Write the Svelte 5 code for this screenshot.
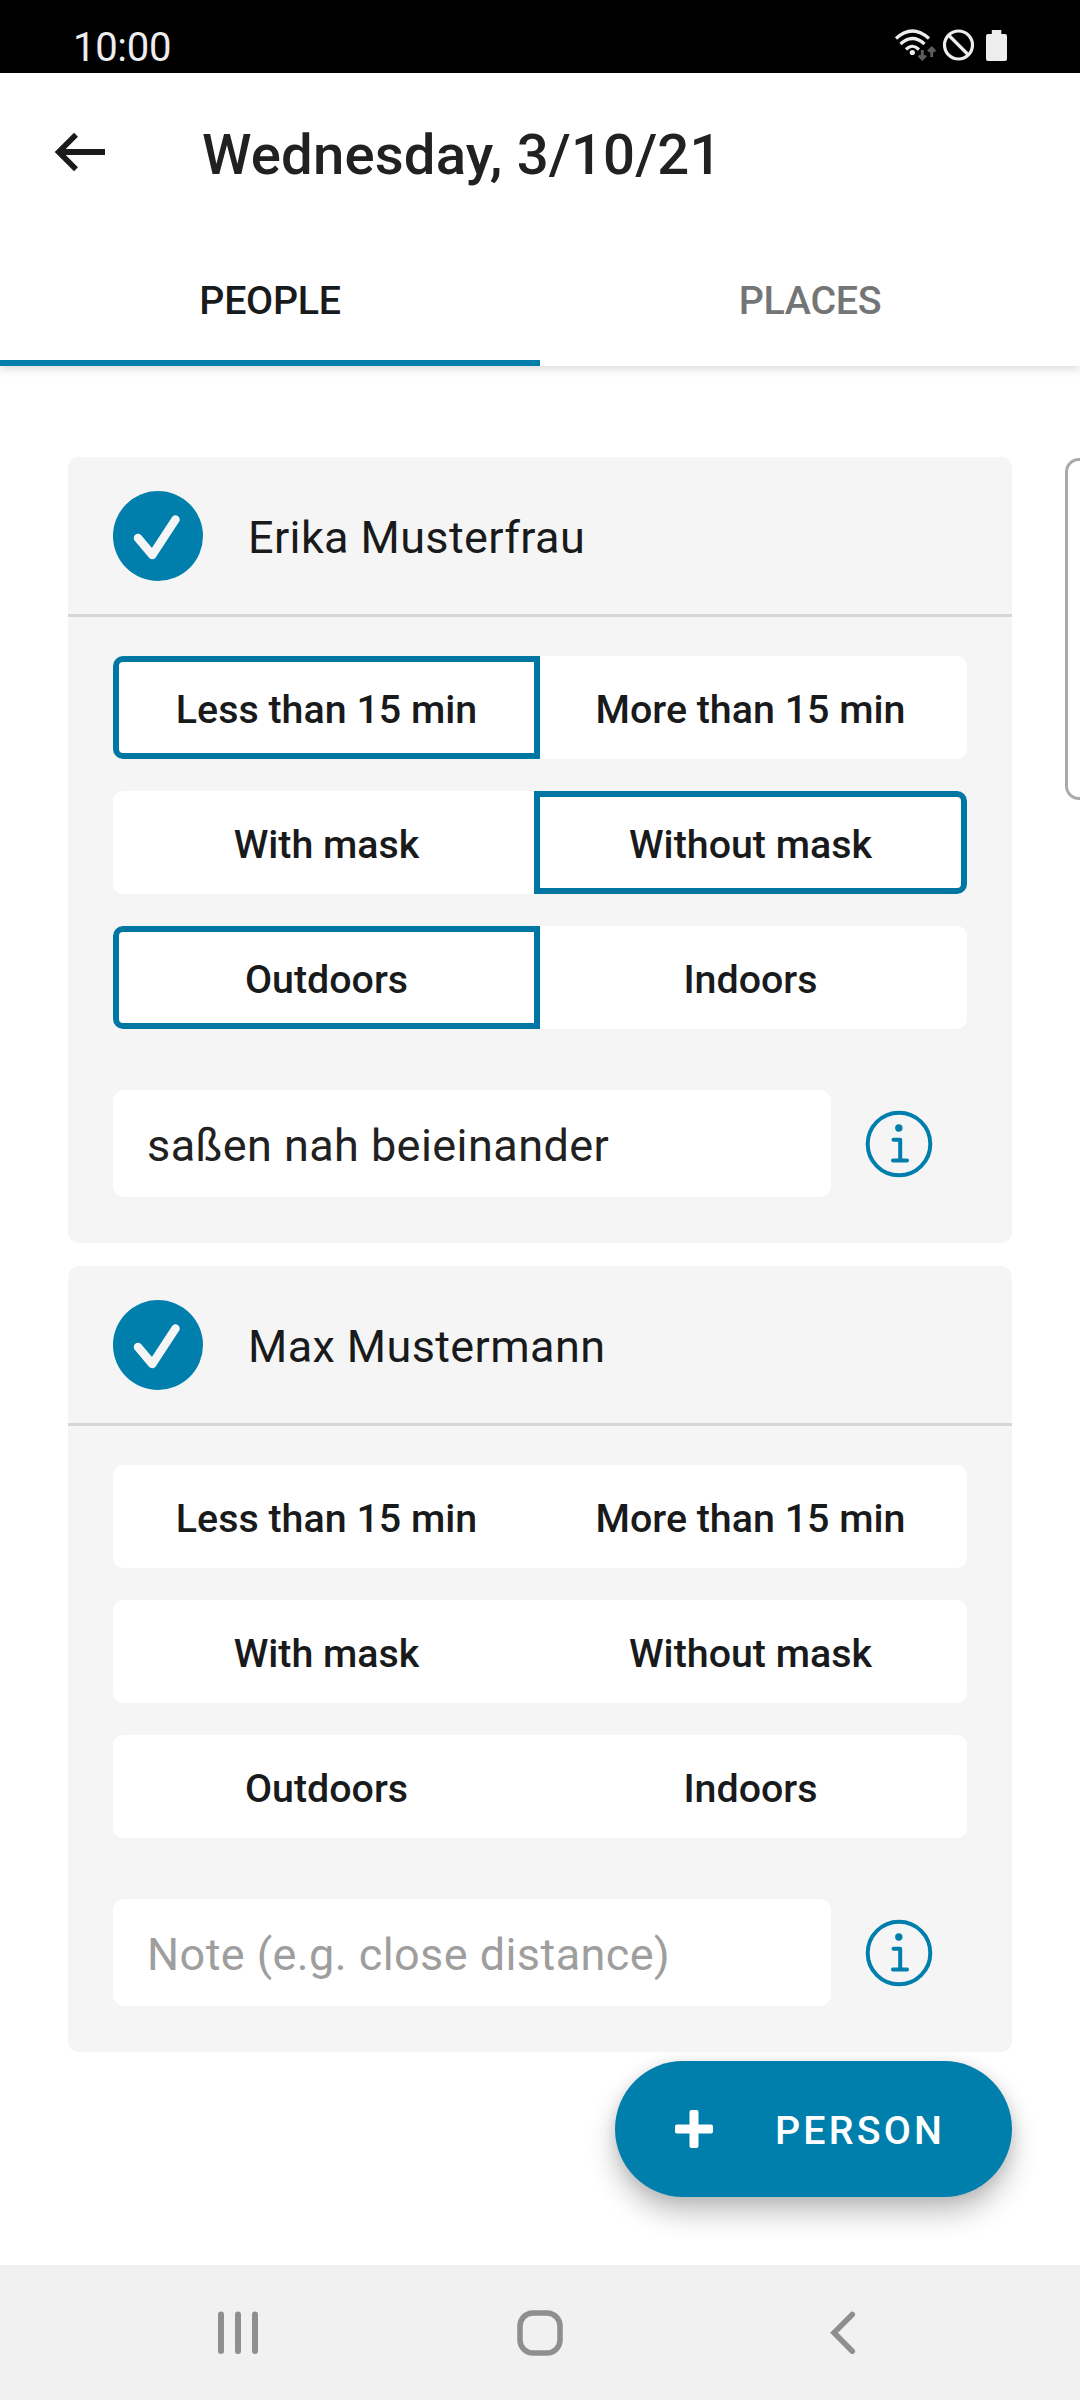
<script>
  const people = [
    { name: 'Erika Musterfrau', note: 'saßen nah beieinander', picks: [0, 1, 0] },
    { name: 'Max Mustermann', note: '', picks: [-1, -1, -1] },
  ];
  const questions = [
    ['Less than 15 min', 'More than 15 min'],
    ['With mask', 'Without mask'],
    ['Outdoors', 'Indoors'],
  ];
</script>

<div class="screen">
  <header class="status">
    <span class="clock">10:00</span>
    <svg class="status-icons" width="116" height="40" viewBox="892 26 116 40" fill="none">
      <g stroke="#ededed" stroke-width="3.2">
        <path d="M896 38.500Q912.300 23.500 929 38.500" />
        <path d="M900.500 44Q912.300 33 924.500 44" />
        <path d="M906 49.500Q912.300 43 919 49.500" />
        <circle cx="958.500" cy="45" r="14" />
        <path d="M948.500 35L968.500 55" />
      </g>
      <circle cx="912.300" cy="52.500" r="2.600" fill="#ededed" />
      <path d="M922.300 50V58M918.800 55.500L922.300 59L925.800 55.500M931.700 57V48.500M928.200 51.500L931.700 48L935.200 51.500" stroke="#5c5c5c" stroke-width="3" />
      <path d="M991.800 30H1001.300V34H1005Q1007 34 1007 36V59Q1007 61 1005 61H988Q986 61 986 59V36Q986 34 988 34H991.800Z" fill="#ededed" />
    </svg>
  </header>

  <div class="appbar">
    <div class="toolbar">
      <svg class="back" width="54" height="44" viewBox="53 130.500 54 44" fill="none" stroke="#191a1c">
        <path d="M76 135.200L58.700 152.500L76 169.800" stroke-width="5.600" />
        <path d="M58 152.500H105" stroke-width="6" />
      </svg>
      <h1>Wednesday, 3/10/21</h1>
    </div>
    <nav class="tabs">
      <div class="tab active">PEOPLE</div>
      <div class="tab">PLACES</div>
    </nav>
  </div>

  <main>
    {#each people as person}
      <section class="card">
        <div class="person">
          <svg width="90" height="90" viewBox="0 0 90 90" fill="none">
            <circle cx="45" cy="45" r="45" fill="#007fad" />
            <path d="M25 47L39.300 64L62.500 28.500" stroke="#f5f5f5" stroke-width="8.500" stroke-linecap="round" stroke-linejoin="round" />
          </svg>
          <span class="name">{person.name}</span>
        </div>
        <div class="details">
          {#each questions as options, q}
            <div class="toggle">
              {#each options as option, i}
                <div class="option" class:selected={person.picks[q] === i}>{option}</div>
              {/each}
            </div>
          {/each}
          <div class="note-row">
            <div class="note" class:placeholder={!person.note}>{person.note || 'Note (e.g. close distance)'}</div>
            <svg width="68" height="68" viewBox="865 1110 68 68" fill="none" stroke="#007fad" stroke-width="4">
              <circle cx="899" cy="1144" r="31.300" />
              <path d="M893.500 1139.700H900.200V1160.500M893 1160.500H907" stroke-linecap="round" stroke-linejoin="round" />
              <circle cx="898.800" cy="1128" r="3.700" fill="#007fad" stroke="none" />
            </svg>
          </div>
        </div>
      </section>
    {/each}
    <div class="edge-handle"></div>
    <div class="fab">
      <svg width="38" height="38" viewBox="0 0 38 38" fill="#fff">
        <rect x="0" y="14.500" width="38" height="9" rx="2" />
        <rect x="14.500" y="0" width="9" height="38" rx="2" />
      </svg>
      <span>PERSON</span>
    </div>
  </main>

  <footer class="navbar">
    <svg width="42" height="48" viewBox="217 2309 42 48" fill="#8f8f8f">
      <rect x="218" y="2311.500" width="6" height="42.500" rx="3" />
      <rect x="235" y="2311.500" width="6" height="42.500" rx="3" />
      <rect x="252" y="2311.500" width="6" height="42.500" rx="3" />
    </svg>
    <svg width="48" height="48" viewBox="516 2309 48 48" fill="none" stroke="#8f8f8f" stroke-width="5.500">
      <rect x="520" y="2313" width="40" height="40" rx="13" />
    </svg>
    <svg width="36" height="48" viewBox="821 2309 36 48" fill="none" stroke="#8f8f8f" stroke-width="5.500" stroke-linecap="round">
      <path d="M852.300 2314.500L834 2332.800L852.300 2351.200" />
    </svg>
  </footer>
</div>

<style>
  :global(body) {
    margin: 0;
    background: #fff;
  }

  .screen {
    width: 1080px;
    height: 2400px;
    display: flex;
    flex-direction: column;
    overflow: hidden;
    background: #fff;
    color: #191a1c;
    font-family: Roboto, sans-serif;
  }

  svg {
    display: block;
    flex: none;
  }

  .status {
    height: 73px;
    box-sizing: border-box;
    padding: 22px 72px 0 73px;
    display: flex;
    justify-content: space-between;
    align-items: flex-start;
    background: #000;
    color: #ededed;
  }

  .clock {
    padding-top: 1px;
    font-size: 40px;
    line-height: 50px;
    letter-spacing: -0.3px;
  }

  .status-icons {
    margin-top: 4px;
  }

  .appbar {
    position: relative;
    z-index: 1;
    height: 293px;
    background: #fff;
    box-shadow: 0 3px 9px rgba(0, 0, 0, 0.15);
  }

  .toolbar {
    height: 158px;
    display: flex;
    align-items: center;
    padding-left: 53px;
    gap: 95px;
  }

  h1 {
    margin: 5px 0 0;
    font-size: 56.25px;
    font-weight: 500;
    line-height: 66px;
    letter-spacing: 0.15px;
    color: #212121;
    white-space: nowrap;
  }

  .tabs {
    height: 135px;
    display: grid;
    grid-template-columns: 1fr 1fr;
  }

  .tab {
    display: flex;
    align-items: center;
    justify-content: center;
    box-sizing: border-box;
    border-bottom: 6px solid transparent;
    padding-top: 10px;
    font-size: 39.375px;
    font-weight: 500;
    letter-spacing: -0.3px;
    color: #747576;
  }

  .tab.active {
    border-color: #007fad;
    color: #191a1c;
  }

  main {
    position: relative;
    flex: 1;
    display: flex;
    flex-direction: column;
    gap: 23px;
    padding: 91px 68px 0;
  }

  .card {
    height: 786px;
    border-radius: 11px;
    background: #f5f5f5;
  }

  .person {
    height: 160px;
    box-sizing: border-box;
    display: flex;
    align-items: center;
    gap: 45px;
    padding: 0 45px;
    border-bottom: 3px solid #d6d6d6;
  }

  .name {
    padding-top: 4px;
    font-size: 45px;
    letter-spacing: 0.38px;
  }

  .details {
    display: flex;
    flex-direction: column;
    gap: 32px;
    padding: 39px 45px 0;
  }

  .toggle {
    height: 103px;
    display: flex;
    border-radius: 10px;
    background: #fff;
  }

  .option {
    width: 427px;
    box-sizing: border-box;
    display: flex;
    align-items: center;
    justify-content: center;
    border: 6px solid transparent;
    padding-top: 3px;
    font-size: 39.375px;
    font-weight: 500;
  }

  .option + .option {
    width: 433px;
    margin-left: -6px;
  }

  .selected {
    border-color: #0077a3;
    border-radius: 10px 0 0 10px;
  }

  .option + .selected {
    border-radius: 0 10px 10px 0;
  }

  .note-row {
    display: flex;
    align-items: center;
    gap: 34px;
    margin-top: 29px;
  }

  .note {
    width: 718px;
    height: 107px;
    box-sizing: border-box;
    padding: 2px 34px 0;
    border-radius: 11px;
    background: #fff;
    color: #212121;
    font-size: 45px;
    line-height: 107px;
    letter-spacing: 0.43px;
    white-space: nowrap;
  }

  .placeholder {
    color: #9e9e9e;
  }

  .edge-handle {
    position: absolute;
    top: 92px;
    right: -20px;
    width: 35px;
    height: 342px;
    box-sizing: border-box;
    border: 3px solid #aaa;
    border-radius: 14px;
  }

  .fab {
    position: absolute;
    right: 68px;
    bottom: 68px;
    width: 397px;
    height: 136px;
    box-sizing: border-box;
    display: flex;
    align-items: center;
    gap: 62px;
    padding-left: 60px;
    border-radius: 68px;
    background: #007fad;
    color: #fff;
    font-size: 39.375px;
    font-weight: 500;
    letter-spacing: 3.2px;
    box-shadow: 0 16px 28px rgba(0, 0, 0, 0.24), 0 2px 14px rgba(0, 0, 0, 0.1);
  }

  .fab span {
    padding-top: 2px;
  }

  .navbar {
    height: 135px;
    box-sizing: border-box;
    display: flex;
    justify-content: space-between;
    align-items: center;
    padding: 0 223px 0 217px;
    background: #f1f1f1;
  }
</style>
